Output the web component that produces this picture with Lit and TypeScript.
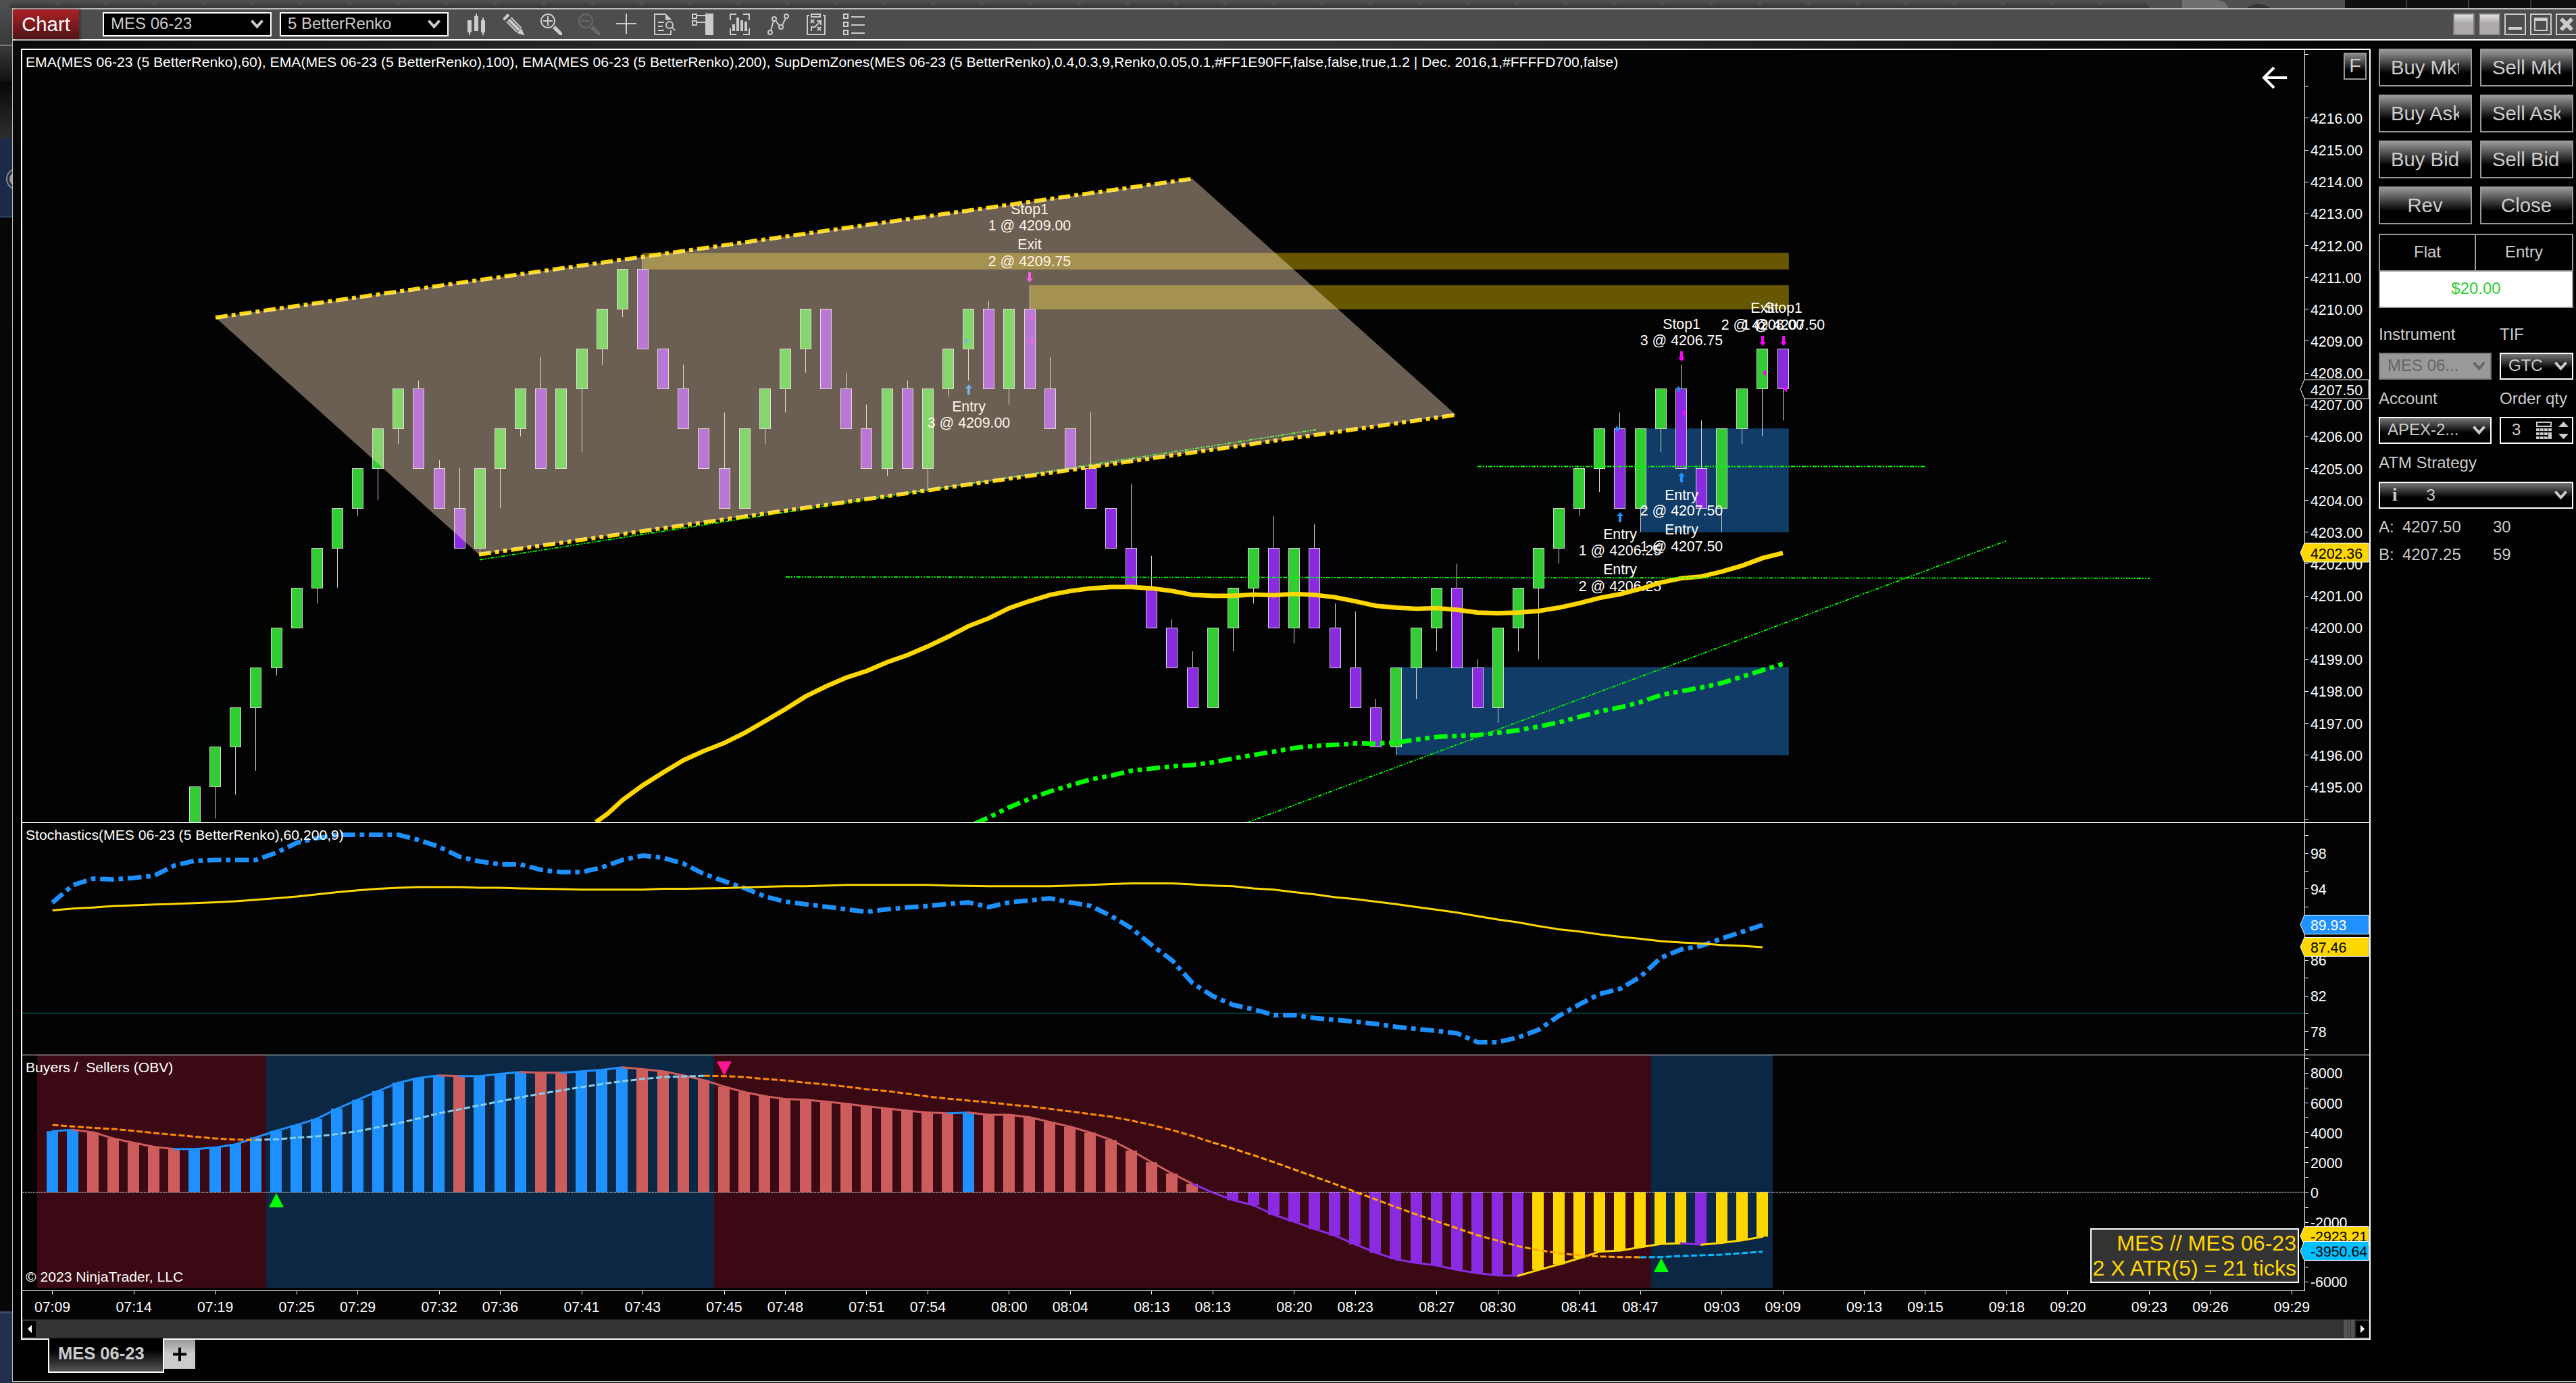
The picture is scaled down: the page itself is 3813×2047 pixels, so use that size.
import { css, html, LitElement, svg, TemplateResult } from 'lit';
import { customElement, property } from 'lit/decorators.js';
import { classMap } from 'lit/directives/class-map.js';

const FIRST_X = 77.55;
const STEP = 30.135;
const AXIS_X = 3411;
const TICK = 11.785;
const UNIT = 0.5402;

const barX = (i: number) => FIRST_X + i * STEP;
// price chart, in 0.25 ticks counted from 4195.00
const tickY = (t: number) => 1164.4 - t * TICK;
const priceY = (p: number) => tickY((p - 4195) * 4);
// indicator samples
const unitY = (v: number) => 1200 + v * UNIT;

// direction, bottom, top, end of wick
const candles: [string, number, number, number?][] = [
    ['u', -5, 0], ['u', 0, 5, -4], ['u', 5, 10, -1], ['u', 10, 15, 2], ['u', 15, 20, 14], ['u', 20, 25],
    ['u', 25, 30, 23], ['u', 30, 35, 25], ['u', 35, 40, 34], ['u', 40, 45, 36], ['u', 45, 50, 43],
    ['d', 40, 50, 51], ['d', 35, 40, 41], ['d', 30, 35, 40], ['u', 30, 40, 29], ['u', 40, 45, 35],
    ['u', 45, 50, 44], ['d', 40, 50, 54], ['u', 40, 50], ['u', 50, 55, 42], ['u', 55, 60, 53],
    ['u', 60, 65, 59], ['d', 55, 65, 67], ['d', 50, 55], ['d', 45, 50, 53], ['d', 40, 45],
    ['d', 35, 40, 47], ['u', 35, 45], ['u', 45, 50, 43], ['u', 50, 55, 47], ['u', 55, 60, 52],
    ['d', 50, 60], ['d', 45, 50, 52], ['d', 40, 45, 48], ['u', 40, 50, 39], ['d', 40, 50, 51],
    ['u', 40, 50, 37], ['u', 50, 55, 49], ['u', 55, 60, 51], ['d', 50, 60, 61], ['u', 50, 60, 48],
    ['d', 50, 60, 63], ['d', 45, 50, 54], ['d', 40, 45], ['d', 35, 40, 47], ['d', 30, 35],
    ['d', 25, 30, 38], ['d', 20, 25, 29], ['d', 15, 20, 21], ['d', 10, 15, 17], ['u', 10, 20],
    ['u', 20, 25, 17], ['u', 25, 30, 23], ['d', 20, 30, 34], ['u', 20, 30, 18], ['d', 20, 30, 33],
    ['d', 15, 20, 23], ['d', 10, 15, 22], ['d', 5, 10, 11], ['u', 5, 15, 4], ['u', 15, 20, 11],
    ['u', 20, 25, 17], ['d', 15, 25, 28], ['d', 10, 15, 16], ['u', 10, 20, 8], ['u', 20, 25, 17],
    ['u', 25, 30, 16], ['u', 30, 35, 28], ['u', 35, 40, 34], ['u', 40, 45, 37], ['d', 35, 45, 47],
    ['u', 35, 45, 32], ['u', 45, 50, 42], ['d', 40, 50, 53], ['d', 35, 40, 46], ['u', 35, 45, 32],
    ['u', 45, 50, 43], ['u', 50, 55, 44], ['d', 50, 55, 46],
];

const emaFast = [
    1184.4, 1162.3, 1143.4, 1125.2, 1111.5, 1099.8, 1084.8, 1067.3, 1049.7, 1030.8, 1015.9, 1002.9, 993.1, 980.1,
    969.7, 956.7, 942.4, 926.7, 915, 900.1, 889.7, 880.5, 874.7, 870.8, 868.8, 868.8, 870.8, 874.7, 880.5, 881.8,
    881.8, 880, 881, 879, 880.5, 884, 890, 896.6, 899.4, 901, 900, 902.7, 906.6, 907.7, 906.6, 904.4, 899.4, 892.7,
    885, 879.4, 871.6, 862.2, 856, 853.3, 846, 837.2, 826, 818.4,
];
const emaSlow = [
    1209.8, 1194.8, 1182.4, 1171.4, 1162.3, 1153.8, 1147.9, 1140.8, 1137.5, 1134.3, 1132.3, 1128.4, 1122.6, 1117.4,
    1112.5, 1107, 1104, 1102.5, 1100.3, 1100.8, 1099, 1094.7, 1090.8, 1089.2, 1088, 1084.7, 1080.9, 1075.3, 1069.2,
    1060.9, 1053, 1047, 1039.2, 1028.7, 1023, 1017.6, 1011, 1001.5, 992, 982.6,
];
const stochD = [
    273, 268, 265, 261, 259, 257, 255, 253, 251, 248, 244, 240, 235, 229, 223, 218, 214, 211, 209, 209, 209, 211, 211,
    213, 214, 215, 216, 216, 216, 216, 214, 214, 213, 212, 210, 208, 207, 207, 205, 203, 203, 203, 203, 203, 205, 206,
    207, 207, 207, 207, 205, 203, 201, 199, 199, 199, 202, 205, 207, 213, 216, 223, 229, 237, 242, 249, 256, 264, 271,
    279, 289, 298, 306, 316, 325, 331, 339, 345, 351, 357, 361, 364, 368, 370, 374,
];
const stochK = [
    252, 204, 186, 188, 184, 178, 150, 137, 135, 135, 135, 115, 88, 75, 66, 66, 66, 66, 80, 99, 126, 139, 147, 147,
    162, 168, 168, 155, 135, 123, 129, 145, 173, 193, 212, 235, 249, 256, 263, 270, 277, 270, 265, 261, 255, 251, 264,
    251, 246, 240, 251, 261, 288, 322, 368, 410, 472, 508, 532, 544, 560, 560, 568, 573, 578, 584, 592, 598, 603, 610,
    634, 634, 621, 600, 562, 531, 502, 488, 455, 403, 380, 370, 350, 332, 313,
];
const obv = [
    878, 874, 881, 898, 910, 921, 927, 927, 923, 914, 895, 877, 861, 844, 816, 792, 768, 745, 732, 725, 727, 727, 721,
    716, 718, 718, 714, 710, 703, 708, 714, 725, 738, 756, 771, 782, 790, 792, 797, 803, 810, 816, 822, 827, 829, 827,
    833, 833, 840, 853, 866, 882, 902, 931, 963, 994, 1022, 1046, 1067, 1081, 1107, 1126, 1146, 1164, 1188, 1211, 1229,
    1239, 1246, 1258, 1267, 1273, 1274, 1258, 1243, 1226, 1208, 1205, 1196, 1187, 1185, 1189, 1184, 1177, 1167,
];
const obvAverage = [
    861, 865, 869, 872, 877, 883, 888, 893, 898, 901, 902, 900, 896, 892, 886, 878, 867, 856, 843, 829, 818, 807, 796,
    785, 775, 766, 757, 749, 741, 735, 730, 728, 726, 727, 730, 735, 739, 745, 750, 756, 763, 768, 775, 783, 789, 794,
    799, 805, 810, 817, 824, 831, 838, 849, 861, 875, 891, 909, 926, 944, 963, 983, 1003, 1023, 1044, 1065, 1086, 1106,
    1125, 1144, 1163, 1178, 1193, 1204, 1212, 1218, 1221, 1223, 1223.5, 1223, 1220, 1218, 1216, 1212, 1208,
];
// one letter per bar: b = blue, r = red, p = purple, y = gold
const obvColors = 'bbrrrrrbbbbbbbbbbbbbrbbbrrbbbrrrrrrrrrrrrrrrrbrrrrrrrrrrrppppppppppppppppyyyyyyyypyyy';
const palette: Record<string, string> = { b: '#1e90ff', r: '#cd5c5c', p: '#8a2be2', y: '#ffd700' };

const times: [number, string][] = [
    [0, '07:09'], [4, '07:14'], [8, '07:19'], [12, '07:25'], [15, '07:29'], [19, '07:32'], [22, '07:36'],
    [26, '07:41'], [29, '07:43'], [33, '07:45'], [36, '07:48'], [40, '07:51'], [43, '07:54'], [47, '08:00'],
    [50, '08:04'], [54, '08:13'], [57, '08:13'], [61, '08:20'], [64, '08:23'], [68, '08:27'], [71, '08:30'],
    [75, '08:41'], [78, '08:47'], [82, '09:03'], [85, '09:09'], [89, '09:13'], [92, '09:15'], [96, '09:18'],
    [99, '09:20'], [103, '09:23'], [106, '09:26'], [110, '09:29'],
];

// x, baseline, text
const executions: [number, number, string][] = [
    [1524, 317, 'Stop1'], [1524, 341, '1 @ 4209.00'], [1524, 369, 'Exit'], [1524, 394, '2 @ 4209.75'],
    [1434, 609, 'Entry'], [1434, 633, '3 @ 4209.00'],
    [2489, 487, 'Stop1'], [2489, 511, '3 @ 4206.75'],
    [2609, 463, 'Exit'], [2609, 488, '2 @ 4208.00'],
    [2640, 463, 'Stop1'], [2640, 488, '1 @ 4207.50'],
    [2489, 740, 'Entry'], [2489, 763, '2 @ 4207.50'], [2489, 791, 'Entry'], [2489, 816, '1 @ 4207.50'],
    [2398, 798, 'Entry'], [2398, 822, '1 @ 4206.25'], [2398, 850, 'Entry'], [2398, 875, '2 @ 4206.25'],
];
const sells: [number, number][] = [[1524, 403], [2489, 520], [2609, 497], [2640, 497]];
const buys: [number, number][] = [[1434, 569], [2489, 699], [2398, 758]];
const sellMarks: [number, number][] = [[1524, 470], [1524, 505], [2489, 611], [2609, 552], [2640, 576]];
const buyMarks: [number, number][] = [[1434, 505], [2398, 635], [2489, 576]];

const points = (values: number[], from: number, y: (v: number) => number) =>
    values.map((v, i) => `${barX(from + i).toFixed(1)},${y(v).toFixed(1)}`).join(' ');

const range = (from: number, to: number, step: number) => {
    const list: number[] = [];
    for (let v = from; v <= to; v += step) list.push(v);
    return list;
};

const tag = (y: number, label: string, fill: string, color: string) => svg`
  <path d="M3405 ${y} L3411 ${y - 14} H3506 V${y + 14} H3411 Z" fill=${fill} stroke="#fff" stroke-width="1"></path>
  <text x="3420" y=${y + 8.5} fill=${color}>${label}</text>`;

const tick = (y: number) => svg`<path d="M${AXIS_X} ${y} h6" stroke="#fff" stroke-width="1"></path>`;

@customElement('chart-view')
export class ChartView extends LitElement {

    static get styles() {
        return css`
      :host {
        display: flex;
        flex-direction: column;
        position: relative;
        width: 3478px;
        height: 1911px;
        box-sizing: border-box;
        border: 2px solid #fff;
        background: #030303;
      }
      svg {
        display: block;
        flex: none;
        width: 3474px;
        font: 21.3px 'Liberation Sans', Arial, sans-serif;
        fill: #fff;
      }
      .price { height: 1143px; }
      .stoch { height: 344px; border-top: 1px solid #fff; box-sizing: border-box; }
      .obv { height: 349px; border-top: 1px solid #fff; box-sizing: border-box; }
      .time { height: 43px; }
      .none { fill: none; }
      .label { text-anchor: middle; }
      .caption { font-size: 21.13px; }
      .scroll {
        display: flex;
        align-items: center;
        flex: 1;
        padding: 0 1px;
        background: #333;
        border-bottom: 1px solid #181818;
      }
      .arrow {
        display: flex;
        align-items: center;
        justify-content: center;
        width: 19px;
        height: 24px;
        background: #000;
      }
      .left, .right {
        border: 6px solid transparent;
        border-left-width: 0;
        border-right: 6px solid #fff;
      }
      .right {
        border-right: 0;
        border-left: 6px solid #fff;
      }
      .track { flex: 1; }
      .thumb {
        width: 16px;
        height: 27px;
        margin-right: 2px;
        background: linear-gradient(90deg, #555 35%, #333 35% 45%, #555 45% 60%, #333 60% 70%, #555 70%);
      }
      .fixed {
        position: absolute;
        top: 4px;
        right: 4px;
        width: 34px;
        height: 40px;
        box-sizing: border-box;
        border: 2px solid #999;
        background: linear-gradient(#888, #000 70%);
        color: #ccc;
        font: 29px/35px 'Liberation Sans', Arial, sans-serif;
        text-align: center;
      }
      .atr {
        position: absolute;
        left: 3061px;
        top: 1744px;
        width: 309px;
        height: 81px;
        box-sizing: border-box;
        padding: 2px 2px 0 0;
        border: 2px solid #fff;
        background: #333;
        color: #ffd700;
        font: 32.1px/37px 'Liberation Sans', Arial, sans-serif;
        text-align: right;
        white-space: nowrap;
      }
    `;
    }

    renderCandle([dir, bottom, top, wick]: [string, number, number, number?], i: number) {
        const x = Math.floor(barX(i + 7));
        const y = Math.round(tickY(top));
        const h = Math.round(tickY(bottom)) - y;
        const from = wick !== undefined && wick > top ? top : bottom;
        return svg`
      <path d="M${x + 0.5} ${tickY(from)} V${tickY(wick ?? from)}" stroke="#d3d3d3"></path>
      <rect x=${x - 7.5} y=${y + 0.5} width="16" height=${h} fill=${dir === 'u' ? '#32cd32' : '#8a2be2'}
        stroke="#d3d3d3"></rect>`;
    }

    renderPrice() {
        return html`
      <svg class="price" viewBox="33 74 3474 1143">
        <text class="caption" x="38" y="99">EMA(MES 06-23 (5 BetterRenko),60), EMA(MES 06-23 (5 BetterRenko),100), EMA(MES 06-23 (5 BetterRenko),200), SupDemZones(MES 06-23 (5 BetterRenko),0.4,0.3,9,Renko,0.05,0.1,#FF1E90FF,false,false,true,1.2 | Dec. 2016,1,#FFFFD700,false)</text>
        <g fill="#675701" stroke="#544703">
          <rect x="952.5" y="374.5" width="1695" height="24"></rect>
          <rect x="1524.5" y="422.5" width="1123" height="35"></rect>
        </g>
        <g fill="#103c67" stroke="#0d3154">
          <rect x="2428.5" y="634.5" width="219" height="153"></rect>
          <rect x="2066.5" y="987.5" width="581" height="130"></rect>
        </g>
        ${candles.map((c, i) => this.renderCandle(c, i))}
        ${sells.map(([x, y]) => svg`<path d="M${x - 2} ${y} h4 v9 h3 l-5 6 l-5 -6 h3 Z" fill="#f0f"></path>`)}
        ${buys.map(([x, y]) => svg`<path d="M${x - 2} ${y + 15} h4 v-9 h3 l-5 -6 l-5 6 h3 Z" fill="#1e90ff"></path>`)}
        ${sellMarks.map(([x, y]) => svg`<path d="M${x} ${y} l5 -5 v10 Z" fill="#f0f"></path>`)}
        ${buyMarks.map(([x, y]) => svg`<path d="M${x} ${y} l-6 -5 v10 Z" fill="#1e90ff"></path>`)}
        <g class="label">
          ${executions.map(([x, y, t]) => svg`<text x=${x} y=${y}>${t}</text>`)}
        </g>
        <g class="none" stroke-width="6.7">
          <polyline points="882,1217 900,1204 ${points(emaFast, 28, v => v)}" stroke="#ffd700"></polyline>
          <polyline points="1443,1219 ${points(emaSlow, 46, v => v)}" stroke="#0f0"
            stroke-dasharray="20.1 6.7 6.7 6.7 6.7 6.7"></polyline>
        </g>
        <g stroke="#0f0" stroke-width="1.8" stroke-dasharray="6 2 2 2 2 2">
          <path d="M2187 690.5 H2850"></path>
          <path d="M1163 854 L3182 856"></path>
          <path d="M710 828.5 L1948 636"></path>
          <path d="M1846 1217.5 L2969.5 800.6"></path>
        </g>
        <g stroke="#ffd700" stroke-width="6">
          <path d="M319 470 L1765 264.5" stroke-dasharray="18 6 6 6"></path>
          <path d="M709 820.7 L2155 614" stroke-dasharray="18 6 6 6 6 6"></path>
        </g>
        <path d="M319 470 L1765 264.5 L2155 614 L709 820.7 Z" fill="#ffe4c4" fill-opacity=".41"></path>
        <path class="none" d="M3385 115 H3352 M3366 100 L3351 115 L3366 130" stroke="#fff" stroke-width="4"></path>
        <path d="M3411.5 74 V1217" stroke="#fff"></path>
        ${range(4194, 4218, 1).map(p => tick(Math.round(priceY(p)) + 0.5))}
        ${range(4195, 4216, 1).map(p => svg`<text x="3420" y=${priceY(p) + 8.5}>${p.toFixed(2)}</text>`)}
        ${tag(576, '4207.50', '#030303', '#fff')}
        ${tag(818, '4202.36', '#ffd700', '#000')}
      </svg>`;
    }

    renderStoch() {
        const y = (v: number) => 1262.7 + (98 - v) * 13.18;
        return html`
      <svg class="stoch" viewBox="33 1218 3474 343">
        <path d="M33 1499.5 H3410" stroke="#008b8b"></path>
        <g class="none">
          <polyline points=${points(stochK, 0, unitY)} stroke="#1e90ff" stroke-width="6.8"
            stroke-dasharray="20.5 6.8 6.8 6.8"></polyline>
          <polyline points=${points(stochD, 0, unitY)} stroke="#ffd700" stroke-width="3"></polyline>
        </g>
        <text class="caption" x="38" y="1243">Stochastics(MES 06-23 (5 BetterRenko),60,200,9)</text>
        <path d="M3411.5 1218 V1561" stroke="#fff"></path>
        ${range(76, 100, 2).map(v => tick(Math.round(y(v)) + 0.5))}
        ${[98, 94, 86, 82, 78].map(v => svg`<text x="3420" y=${y(v) + 8.5}>${v}</text>`)}
        ${tag(1368.5, '89.93', '#1e90ff', '#fff')}
        ${tag(1401.5, '87.46', '#ffd700', '#000')}
      </svg>`;
    }

    renderObv() {
        const y = (v: number) => 1764.5 - v * 0.02207;
        const zero = 1764.5;
        const average = (from: number, to: number, color: string) => svg`
      <polyline points=${points(obvAverage.slice(from, to + 1), from, unitY)} stroke=${color}
        stroke-dasharray="9 3.5"></polyline>`;
        return html`
      <svg class="obv" viewBox="33 1562 3474 348">
        <path d="M55 1562 H394 V1906 H55 Z M1057 1562 H2444 V1906 H1057 Z" fill="#3a0913"></path>
        <path d="M394 1562 H1057 V1906 H394 Z M2444 1562 H2624 V1906 H2444 Z" fill="#0c2744"></path>
        ${obv.map((v, i) => svg`
          <rect x=${Math.round(barX(i)) - 9} width="17" y=${Math.min(unitY(v), zero)}
            height=${Math.abs(unitY(v) - zero)} fill=${palette[obvColors[i]]}></rect>`)}
        <path d="M33 1764.5 H3410" stroke="#ddd" stroke-dasharray="3 1"></path>
        <g stroke-width="3" stroke-linecap="round">
          ${obv.slice(1).map((v, i) => svg`
            <path d="M${barX(i)} ${unitY(obv[i])} L${barX(i + 1)} ${unitY(v)}" stroke=${palette[obvColors[i + 1]]}></path>`)}
        </g>
        <g class="none" stroke-width="3">
          ${average(0, 10, '#ff8c00')}
          ${average(10, 32, '#87ceeb')}
          ${average(32, 57, '#ff8c00')}
          ${average(57, 78, '#ffa500')}
          ${average(78, 84, '#00bfff')}
        </g>
        <g fill="#0f0">
          <path d="M409 1766 l11 21 h-22 Z"></path>
          <path d="M2459 1862 l11 21 h-22 Z"></path>
        </g>
        <path d="M1072 1592 l-11 -21 h22 Z" fill="#ff1493"></path>
        <text class="caption" x="38" y="1587">Buyers /&#160; Sellers (OBV)</text>
        <text class="caption" x="38" y="1897">© 2023 NinjaTrader, LLC</text>
        <path d="M3411.5 1562 V1910" stroke="#fff"></path>
        ${range(-6000, 9000, 1000).map(v => tick(Math.round(y(v)) + 0.5))}
        ${[8000, 6000, 4000, 2000, 0, -2000, -6000].map(v => svg`<text x="3420" y=${y(v) + 8.5}>${v}</text>`)}
        ${tag(1829.5, '-2923.21', '#ffd700', '#000')}
        ${tag(1851.5, '-3950.64', '#00bfff', '#000')}
      </svg>`;
    }

    renderTime() {
        return html`
      <svg class="time" viewBox="33 1910 3474 43">
        <path d="M33 1910.5 H3412" stroke="#fff"></path>
        ${times.map(([i, t]) => svg`
          <path d="M${Math.floor(barX(i)) + 0.5} 1911 v5" stroke="#fff"></path>
          <text class="label" x=${barX(i)} y="1942">${t}</text>`)}
      </svg>`;
    }

    render() {
        return html`
      ${this.renderPrice()}
      ${this.renderStoch()}
      ${this.renderObv()}
      ${this.renderTime()}
      <div class="scroll">
        <div class="arrow"><div class="left"></div></div>
        <div class="track"></div>
        <div class="thumb"></div>
        <div class="arrow"><div class="right"></div></div>
      </div>
      <div class="fixed">F</div>
      <div class="atr">MES // MES 06-23<br>2 X ATR(5) = 21 ticks</div>
    `;
    }
}

@customElement('combo-box')
export class ComboBox extends LitElement {

    @property() value = '';
    @property({ type: Boolean, reflect: true }) disabled = false;
    @property({ type: Boolean, reflect: true }) flat = false;

    static get styles() {
        return css`
      :host {
        display: flex;
        align-items: center;
        box-sizing: border-box;
        height: 40px;
        padding: 0 7px 0 11px;
        border: 2px solid #fff;
        background: linear-gradient(#777, #000 60%);
        color: #ccc;
        font: 24px/32px 'Liberation Sans', Arial, sans-serif;
        white-space: pre;
      }
      :host([flat]) {
        height: 36px;
        padding: 0 10px;
        background: #000;
      }
      :host([disabled]) {
        border-color: #777;
        background: #999;
        color: #666;
      }
      span {
        flex: 1;
        padding-bottom: 2px;
      }
      svg {
        display: block;
        width: 19px;
        height: 14px;
        fill: none;
        stroke: currentColor;
        stroke-width: 4;
      }
    `;
    }

    render() {
        return html`
      <span><slot></slot>${this.value}</span>
      <svg viewBox="0 0 19 14"><path d="M1.5 1.5 L9.5 10.5 L17.5 1.5"></path></svg>
    `;
    }
}

@customElement('tool-bar')
export class ToolBar extends LitElement {

    static get styles() {
        return css`
      :host {
        display: flex;
        align-items: center;
        height: 44px;
        background: #4d4d4d;
        border-bottom: 2px solid #fff;
      }
      .title {
        width: 98px;
        height: 44px;
        margin-right: 35px;
        background: linear-gradient(#ad2024, #4f1418);
        box-shadow: 2px 0 4px #333;
        color: #fff;
        font: 29.3px/43px 'Liberation Sans', Arial, sans-serif;
        text-align: center;
      }
      combo-box {
        width: 250px;
        margin-right: 12px;
      }
      .icons {
        display: flex;
        flex: 1;
        gap: 24px;
        margin-left: 12px;
      }
      svg {
        display: block;
        flex: none;
        width: 32px;
        height: 32px;
        overflow: visible;
        fill: #ccc;
        stroke: none;
      }
      .line {
        fill: none;
        stroke: #ccc;
        stroke-width: 2;
      }
      .thick { stroke-width: 6; }
      .off { opacity: .22; }
      .buttons {
        display: flex;
        flex: none;
        gap: 6px;
        margin-right: -2px;
      }
      .button {
        width: 32px;
        height: 32px;
        box-sizing: border-box;
        border: 2px solid #ccc;
      }
      .button svg {
        width: 28px;
        height: 28px;
      }
      .blank {
        border-color: #a9a9ae #7b7b80 #8b8b93;
        background: linear-gradient(#e2e0e2, #ada8aa 45%);
      }
    `;
    }

    icons: TemplateResult[] = [
        svg`<path d="M4 10h6v18h-6z M6 28h2v4h-2z M14 4h6v22h-6z M16 0h2v4h-2z M24 10h6v18h-6z M26 6h2v4h-2z M26 28h2v4h-2z"></path>`,
        svg`<path d="M0 8 L7 0 L10.5 3 L3 10.5 Z M27.5 21.5 L32.5 32.5 L21.5 29 Z"></path>
            <path d="M5 12.5 L6.5 11 L22 26.5 L20.5 28 Z M11.5 6.5 L13 5 L28 20.5 L26.5 22 Z"></path>
            <path d="M7.5 10.5 L10.5 7.5 L26 23 L23 26 Z"></path>`,
        svg`<circle class="line" cx="11" cy="11" r="10"></circle>
            <path class="line" d="M4 11h14 M11 4v14"></path>
            <path d="M18 22 L22 18 L32 28.5 V32 H28.5 Z"></path>`,
        svg`<g class="off"><circle class="line" cx="11" cy="11" r="10"></circle>
            <path class="line" d="M4 11h14"></path>
            <path d="M18 22 L22 18 L32 28.5 V32 H28.5 Z"></path></g>`,
        svg`<path class="line" d="M0 15h30 M15 0v30"></path>`,
        svg`<path class="line" d="M17 1 H1 V31 H25 V25 M6 13h9 M6 19h7 M6 25h9"></path>
            <path d="M17 0 L26.5 9.5 H17 Z"></path>
            <circle class="line" cx="23" cy="17" r="5"></circle>
            <path class="line" d="M26.5 20.5 L31.5 25"></path>`,
        svg`<path d="M20 0h12v32h-12z"></path>
            <path class="line" d="M1 1h6v6h-6z M1 11h6v6h-6z M8 3h12 M8 13h12"></path>`,
        svg`<path class="line" d="M10 1 H1 V10 M20 1 H29 V10 M10 31 H1 V22 M20 31 H29 V22"></path>
            <path d="M4 16h4v10h-4z M10 6h4v20h-4z M16 10h4v16h-4z M22 12h4v14h-4z"></path>`,
        svg`<path class="line" d="M5 25 L9 11 M12 11 L18 18 M22 17 L27 7"></path>
            <g class="line"><circle cx="4" cy="28" r="3"></circle><circle cx="10" cy="8" r="3"></circle>
            <circle cx="20" cy="20" r="3"></circle><circle cx="28" cy="4" r="3"></circle></g>`,
        svg`<path class="line" d="M6 3 H3 V31 H29 V3 H26 M9 1h13v4h-13z M8 9l5 5 M13 9l-5 5 M18 20l5 5 M23 20l-5 5"></path>
            <path class="line" d="M9 26 V20 H14 L23 11 M17 11 H23 V17"></path>`,
        svg`<path class="line" d="M1 1h6v6h-6z M1 13h6v6h-6z M1 25h6v6h-6z M12 5h20 M12 17h20 M12 29h20"></path>`,
    ];

    render() {
        return html`
      <div class="title">Chart</div>
      <combo-box flat value="MES 06-23"></combo-box>
      <combo-box flat value="5 BetterRenko"></combo-box>
      <div class="icons">${this.icons.map(i => html`<svg viewBox="0 0 32 32">${i}</svg>`)}</div>
      <div class="buttons">
        <div class="button blank"></div>
        <div class="button blank"></div>
        <div class="button"><svg viewBox="0 0 28 28"><path d="M4 18h20v4h-20z"></path></svg></div>
        <div class="button"><svg viewBox="0 0 28 28"><path class="line" d="M5 6h18v17h-18z"></path><path d="M4 4h20v5h-20z"></path></svg></div>
        <div class="button"><svg viewBox="0 0 28 28"><path class="line thick" d="M6 6 L22 22 M22 6 L6 22"></path></svg></div>
      </div>
    `;
    }
}

@customElement('order-panel')
export class OrderPanel extends LitElement {

    static get styles() {
        return css`
      :host {
        display: block;
        width: 288px;
        color: #ccc;
        font: 24px/28px 'Liberation Sans', Arial, sans-serif;
      }
      .orders {
        display: grid;
        grid-template-columns: 138px 138px;
        grid-auto-rows: 56px;
        gap: 12px;
      }
      .order {
        box-sizing: border-box;
        padding: 0 17px 0 16px;
        border: 2px solid #999;
        background: linear-gradient(#999, #000 66%);
        font-size: 29.3px;
        line-height: 52px;
        white-space: nowrap;
      }
      .order div { overflow: hidden; }
      .center { text-align: center; }
      .position {
        display: grid;
        grid-template-columns: 140px 1fr;
        grid-template-rows: 52px 52px;
        gap: 2px;
        margin-top: 14px;
        border: 2px solid #999;
        background: #999;
        text-align: center;
        line-height: 50px;
      }
      .cell { background: #000; }
      .pnl {
        grid-column: span 2;
        background: #fff;
        color: #32cd32;
      }
      .fields {
        display: grid;
        grid-template-columns: 167px 109px;
        grid-template-rows: 27px 40px 27px 40px 28px 40px;
        column-gap: 12px;
        row-gap: 14px;
        margin-top: 25px;
        line-height: 27px;
      }
      .wide { grid-column: span 2; }
      .qty {
        display: flex;
        align-items: center;
        box-sizing: border-box;
        padding: 0 5px 0 16px;
        border: 2px solid #fff;
        background: #000;
        line-height: 32px;
      }
      .qty span { flex: 1; padding-bottom: 2px; }
      .qty svg { display: block; fill: #ccc; }
      .spin { margin-left: 10px; }
      .info { font: bold 27px/32px 'Liberation Serif', serif; padding: 0 43px 0 7px; }
      .quotes {
        display: grid;
        grid-template-columns: 35px 134px auto;
        row-gap: 13px;
        margin-top: 13px;
      }
    `;
    }

    render() {
        const orders = ['Buy Mkt', 'Sell Mkt', 'Buy Ask', 'Sell Ask', 'Buy Bid', 'Sell Bid', 'Rev', 'Close'];
        return html`
      <div class="orders">
        ${orders.map((o, i) => html`<div class=${classMap({ order: true, center: i > 5 })}><div>${o}</div></div>`)}
      </div>
      <div class="position">
        <div class="cell">Flat</div>
        <div class="cell">Entry</div>
        <div class="pnl">$20.00</div>
      </div>
      <div class="fields">
        <div>Instrument</div><div>TIF</div>
        <combo-box disabled value="MES 06..."></combo-box><combo-box value="GTC"></combo-box>
        <div>Account</div><div>Order qty</div>
        <combo-box value="APEX-2..."></combo-box>
        <div class="qty">
          <span>3</span>
          <svg width="23" height="26" viewBox="0 0 23 26">
            <path d="M0 0h23v8h-23z M2 2v4h19v-4z" fill-rule="evenodd"></path>
            <path d="M0 10h5v4h-5z M6 10h5v4h-5z M12 10h5v4h-5z M18 10h5v4h-5z M0 16h5v4h-5z M6 16h5v4h-5z M12 16h5v4h-5z M0 22h5v4h-5z M6 22h5v4h-5z M12 22h5v4h-5z M18 16h5v10h-5z"></path>
          </svg>
          <svg class="spin" width="15" height="26" viewBox="0 0 15 26">
            <path d="M7.5 0 L15 8 H0 Z M7.5 26 L15 18 H0 Z"></path>
          </svg>
        </div>
        <div class="wide">ATM Strategy</div>
        <combo-box class="wide" value="3"><span class="info">i</span></combo-box>
      </div>
      <div class="quotes">
        <div>A:</div><div>4207.50</div><div>30</div>
        <div>B:</div><div>4207.25</div><div>59</div>
      </div>
    `;
    }
}

@customElement('app-root')
export class AppRoot extends LitElement {

    static get styles() {
        return css`
      :host {
        display: flex;
        flex-direction: column;
        width: 3813px;
        height: 2047px;
        overflow: hidden;
        background: #070707;
      }
      .top {
        display: block;
        flex: none;
        width: 3813px;
        height: 12px;
      }
      .row {
        display: flex;
        flex: 1;
      }
      .edge {
        display: flex;
        flex-direction: column;
        width: 18px;
      }
      .edge svg { display: block; }
      .tab { height: 54px; background: linear-gradient(#4c4c4c, #3a3a3a); border-bottom: 2px solid #777; }
      .ribbon { height: 53px; background: linear-gradient(#3a3a3a, #111); border-bottom: 2px solid #050505; }
      .shade { height: 82px; background: linear-gradient(#080808, #2e2e2e); }
      .blue { height: 115px; background: #1c2a4a; border-bottom: 2px solid #2c3d63; }
      .dark { flex: 1; }
      .low { height: 103px; background: #20304d; border-top: 3px solid #3c4c69; }
      .window {
        width: 3795px;
        box-sizing: border-box;
        height: 2034px;
        border: 2px solid #bbb;
        border-right: 0;
        border-left-width: 1px;
        background: radial-gradient(ellipse 1900px 900px at 1600px 0, #3c3c3c, #1a1a1a 60%, #000) no-repeat top / 100% 900px #000;
      }
      .body {
        display: flex;
        gap: 12px;
        padding: 12px 0 0 12px;
      }
      .tabs {
        display: flex;
        align-items: flex-start;
        margin: -2px 0 0 52px;
      }
      .sheet {
        position: relative;
        width: 172px;
        height: 51px;
        box-sizing: border-box;
        border: 2px solid #fff;
        border-top: 0;
        background: linear-gradient(#000 35%, #555);
        color: #ccc;
        font: bold 25.5px/44px 'Liberation Sans', Arial, sans-serif;
        padding-left: 13px;
      }
      .add {
        width: 46px;
        height: 43px;
        margin-top: 2px;
        background: linear-gradient(#999, #ccc 50%);
      }
    `;
    }

    render() {
        return html`
      <svg class="top" viewBox="0 0 3813 12">
        <defs>
          <linearGradient id="hump" x2="0" y2="1"><stop stop-color="#505050"></stop><stop offset="1" stop-color="#373737"></stop></linearGradient>
        </defs>
        <rect width="3813" height="12" fill="#4f4f4f"></rect>
        ${range(13, 3160, 72).map(x => svg`<path d="M${x} 12 V10 Q${x + 5} 0 ${x + 16} 0 H${x + 56} Q${x + 67} 0 ${x + 72} 10 V12 Z" fill="url(#hump)"></path>`)}
        <path d="M3230 12 V0 H3282 Q3296 2 3298 12 Z" fill="#707070"></path>
        <path d="M3325 12 Q3343 0 3361 12 Z" fill="#333"></path>
        <rect x="3471" width="342" height="12" fill="#0f0f0f"></rect>
        <path d="M3562 0v12 M3654 0v12 M3746 0v12" stroke="#3c3c3c" stroke-width="2"></path>
      </svg>
      <div class="row">
        <div class="edge">
          <div class="tab"></div>
          <div class="ribbon"></div>
          <div class="shade"></div>
          <div class="blue">
            <svg width="18" height="115" viewBox="0 0 18 115">
              <circle cx="25" cy="60" r="15" fill="none" stroke="#888" stroke-width="2"></circle>
              <circle cx="25" cy="60" r="11" fill="#999"></circle>
            </svg>
          </div>
          <div class="dark"></div>
          <div class="low"></div>
        </div>
        <div class="window">
          <tool-bar></tool-bar>
          <div class="body">
            <chart-view></chart-view>
            <order-panel></order-panel>
          </div>
          <div class="tabs">
            <div class="sheet">MES 06-23</div>
            <svg class="add" viewBox="0 0 46 43"><path d="M13 21.5h20 M23 11.5v20" stroke="#000" stroke-width="4"></path></svg>
          </div>
        </div>
      </div>
    `;
    }
}
